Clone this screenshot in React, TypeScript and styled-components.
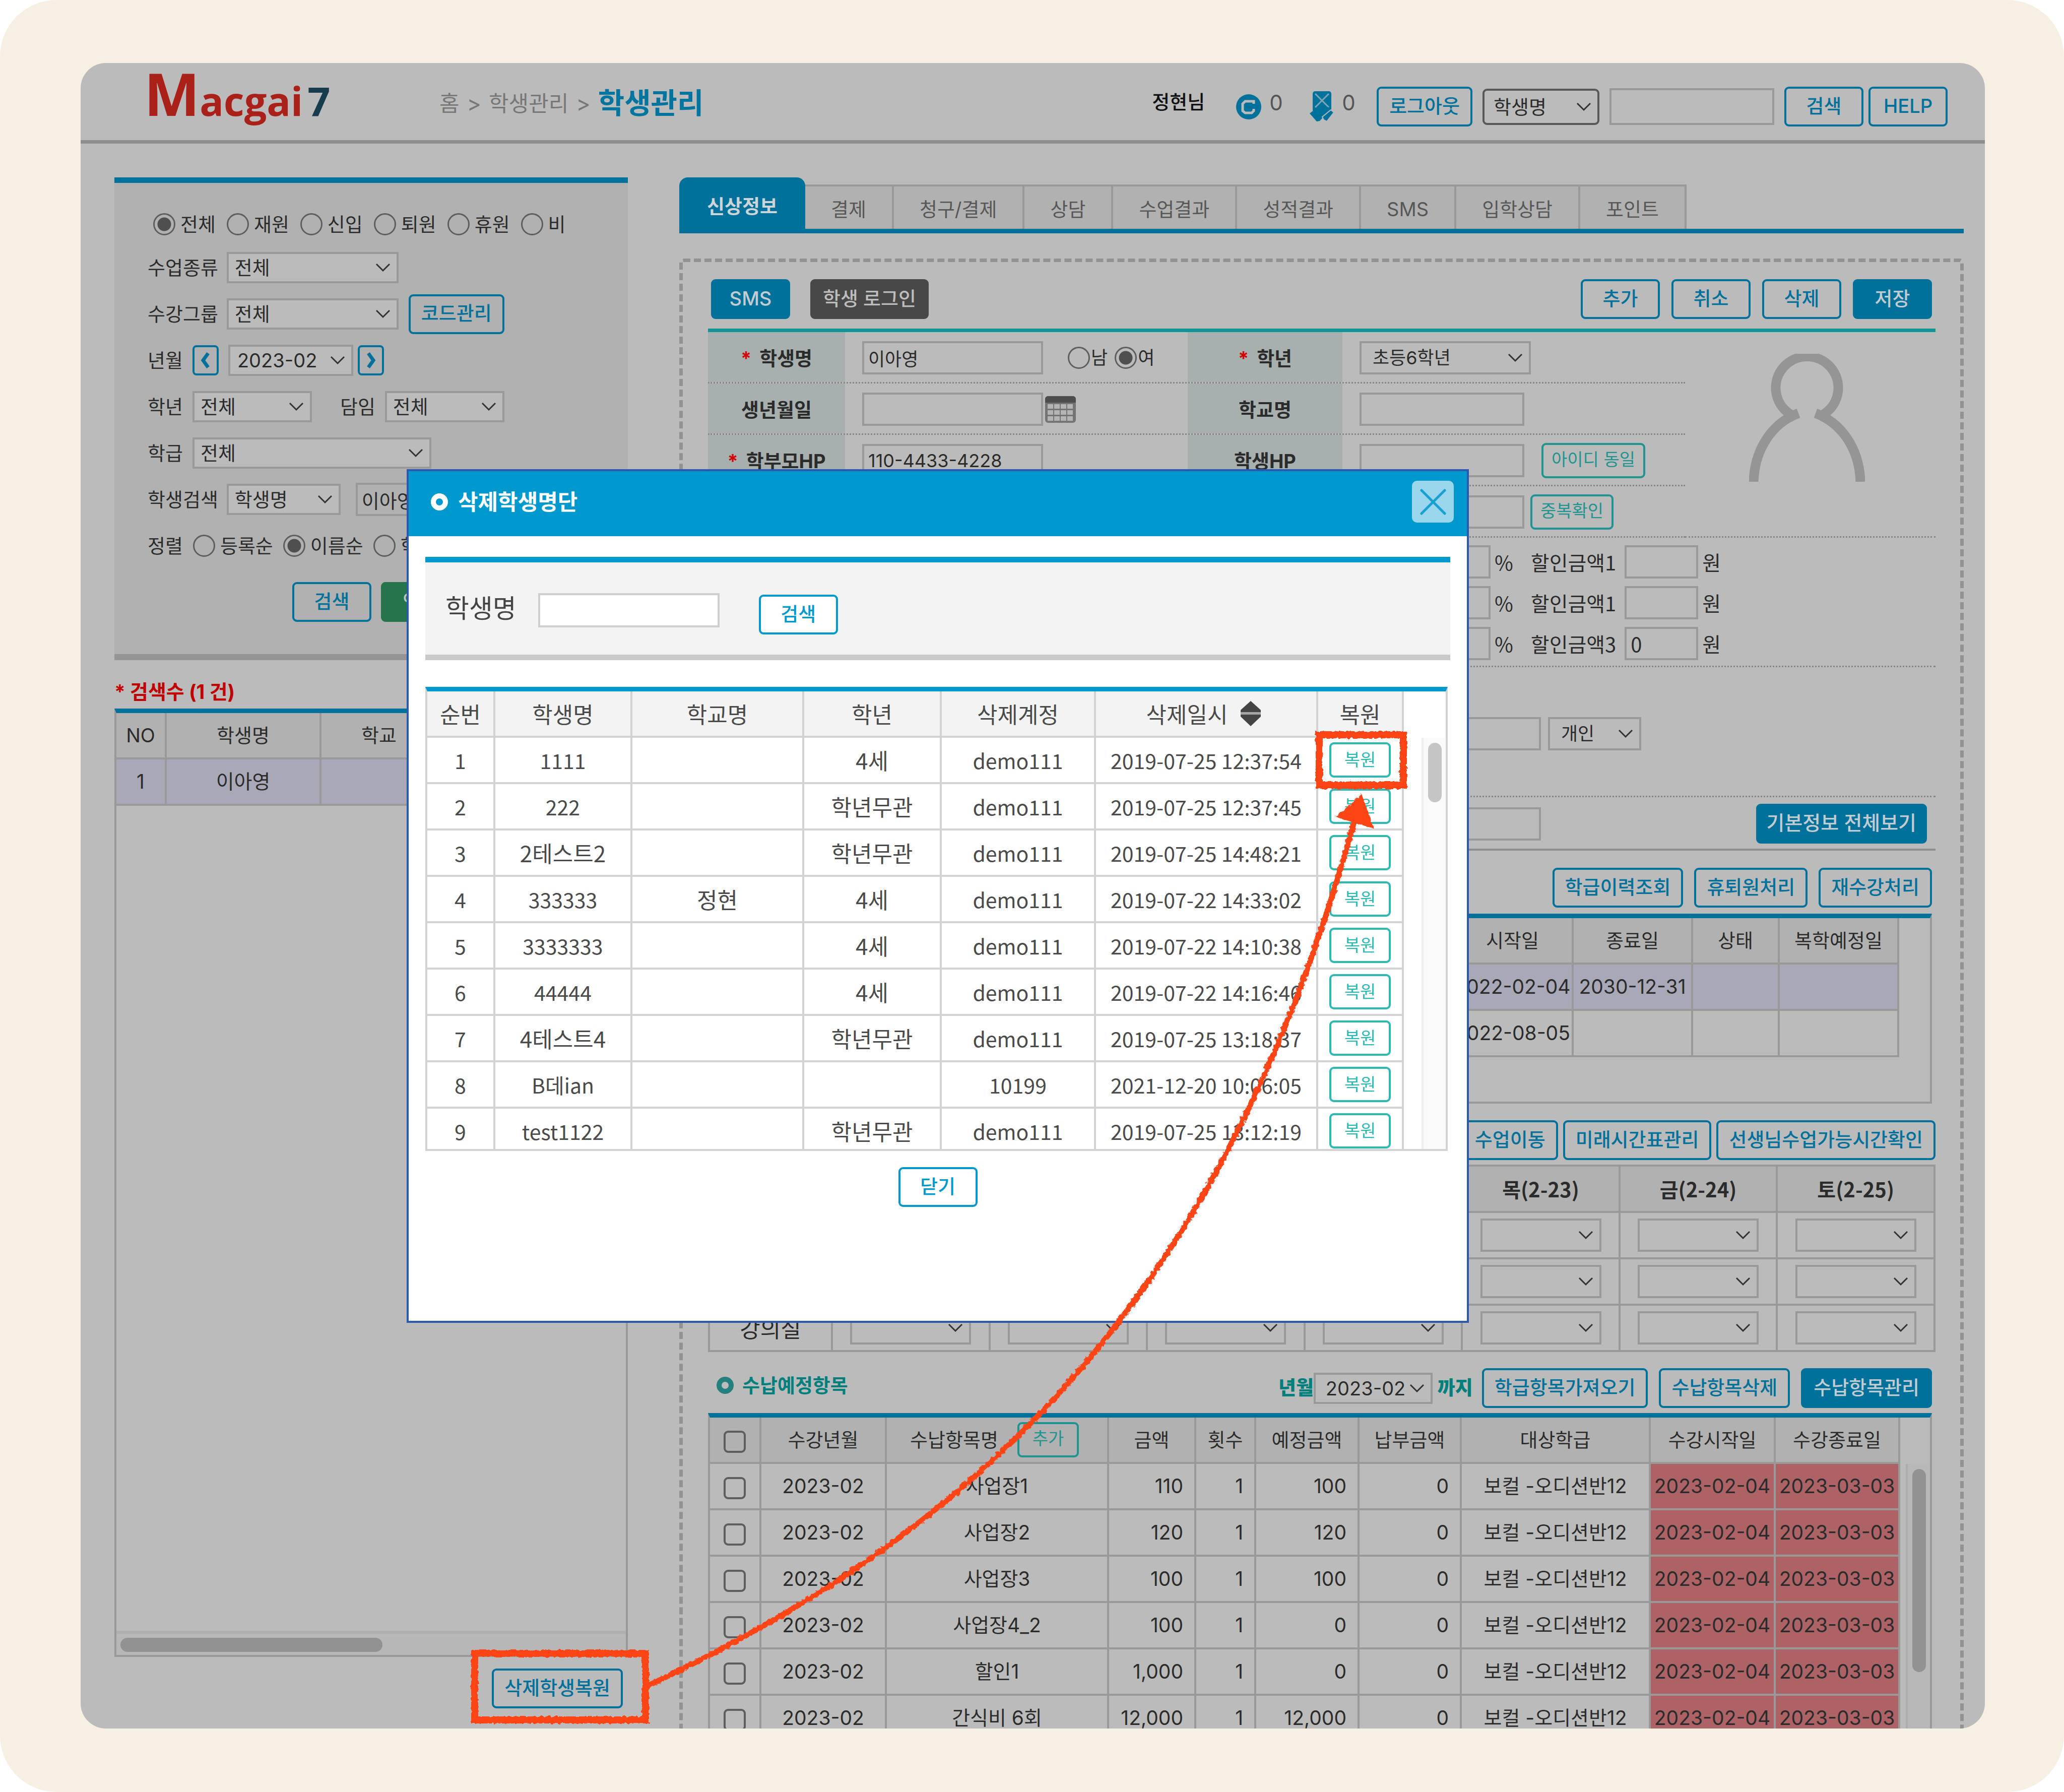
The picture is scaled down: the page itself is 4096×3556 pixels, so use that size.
import React from "react";
import styled, { createGlobalStyle, css } from "styled-components";

const c = {
  cream: "#f8efe3",
  page: "#bbbbbb",
  panel: "#b1b1b1",
  line: "#999999",
  rule: "#8e8e8e",
  blue: "#00719b",
  teal: "#1f9490",
  mint: "#0d9693",
  ink: "#2b2b2b",
  lilac: "#a9a8b6",
  rose: "#ad6266",
  cyan: "#0099cd",
  mark: "#ff4517",
};

const UI = `"Inter", "Noto Sans CJK KR", sans-serif`;
const KR = `"Noto Sans CJK KR", sans-serif`;

const Global = createGlobalStyle`
  *, *::before, *::after { box-sizing: border-box; }
  html, body { margin: 0; background: #ffffff; }
  body { font: 400 38px/48px ${UI}; color: ${c.ink}; }
  button, input, select { font: inherit; color: inherit; margin: 0; }
  h1, h2, p { margin: 0; font: inherit; }
`;

/* ---------- frame ---------- */

const Canvas = styled.div`
  height: 100vh;
  padding: 125px 157px 126px 160px;
  border-radius: 112px;
  background: ${c.cream};
`;

const Card = styled.div`
  position: relative;
  display: flex;
  flex-direction: column;
  height: 100%;
  overflow: hidden;
  border-radius: 50px;
  background: ${c.page};
`;

/* ---------- shared controls ---------- */

type Tone = "line" | "solid" | "dark" | "green" | "teal";

const tones: Record<Tone, ReturnType<typeof css>> = {
  line: css`color: ${c.blue}; border-color: ${c.blue};`,
  solid: css`color: #c3cdd1; background: ${c.blue}; border-color: ${c.blue};`,
  dark: css`color: #bdbdbd; background: #484848; border-color: #484848;`,
  green: css`color: #bdc8c0; background: #25744a; border-color: #25744a;`,
  teal: css`color: ${c.teal}; border-color: ${c.teal};`,
};

const Button = styled.button<{ $tone?: Tone; $onWhite?: boolean }>`
  flex: none;
  min-width: 157px;
  height: 79px;
  padding: 0 21px 4px;
  border: 4px solid;
  border-radius: 9px;
  background: transparent;
  font-weight: 500;
  line-height: 48px;
  white-space: nowrap;
  ${(p) => tones[p.$tone ?? "line"]}
  ${(p) => p.$onWhite && css`color: ${c.cyan}; border-color: ${c.cyan}; background: #fff;`}
`;

const SmallButton = styled(Button)`
  min-width: 122px;
  height: 70px;
  padding: 0 16px 4px;
  font-size: 34px;
  font-weight: 400;
  ${(p) => p.$onWhite && css`color: #2bb9b4; border-color: #2bb9b4;`}
`;

const WideButton = styled(Button)`
  padding: 0 17px 4px;
  font-size: 39px;
`;

const StepButton = styled.button`
  display: grid;
  place-items: center;
  width: 52px;
  height: 60px;
  padding: 0;
  border: 4px solid ${c.blue};
  border-radius: 8px;
  background: transparent;
  color: ${c.blue};
`;

const Field = styled.input<{ $w: number; $h?: number }>`
  flex: none;
  width: ${(p) => p.$w}px;
  height: ${(p) => p.$h ?? 66}px;
  padding: 0 8px;
  border: 4px solid ${c.line};
  border-radius: 0;
  background: transparent;
`;

const SelectWrap = styled.span<{ $w: number; $h?: number; $pad?: number; $dark?: boolean }>`
  flex: none;
  display: inline-grid;
  align-items: center;
  width: ${(p) => p.$w}px;
  height: ${(p) => p.$h ?? 62}px;
  border: 4px solid ${(p) => (p.$dark ? "#585858" : c.line)};
  border-radius: ${(p) => (p.$dark ? 9 : 0)}px;
  background: ${c.page};
  color: ${c.ink};
  font-weight: 400;

  select, svg { grid-area: 1 / 1; }
  select {
    appearance: none;
    width: 100%;
    height: 100%;
    padding: 0 ${(p) => p.$pad ?? 12}px;
    border: 0;
    background: transparent;
  }
  svg { justify-self: end; margin-right: 12px; pointer-events: none; }
`;

function Select(p: { w: number; h?: number; pad?: number; dark?: boolean; label: string; value?: string }) {
  return (
    <SelectWrap $w={p.w} $h={p.h} $pad={p.pad} $dark={p.dark}>
      <select aria-label={p.label}>
        <option>{p.value ?? ""}</option>
      </select>
      <svg width="30" height="18" viewBox="0 0 30 18" fill="none" stroke="#333" strokeWidth="3">
        <path d="M2 2 15 15 28 2" />
      </svg>
    </SelectWrap>
  );
}

const RadioLabel = styled.label<{ $tight?: boolean }>`
  display: inline-flex;
  align-items: center;
  gap: ${(p) => (p.$tight ? 2 : 10)}px;
`;

const RadioInput = styled.input`
  appearance: none;
  flex: none;
  width: 44px;
  height: 44px;
  border: 3px solid #5e5e5e;
  border-radius: 50%;
  &:checked { background: radial-gradient(circle, #4f4f4f 0 13px, transparent 14px); }
`;

function Radio(p: { name: string; text: string; checked?: boolean; tight?: boolean }) {
  return (
    <RadioLabel $tight={p.tight}>
      <RadioInput type="radio" name={p.name} defaultChecked={p.checked} />
      {p.text}
    </RadioLabel>
  );
}

const CheckBox = styled.input`
  appearance: none;
  display: block;
  width: 44px;
  height: 44px;
  margin: 8px auto 0;
  border: 4px solid #5e5e5e;
  border-radius: 9px;
`;

const Ring = styled.span<{ $color: string }>`
  flex: none;
  width: 34px;
  height: 34px;
  border: 10px solid ${(p) => p.$color};
  border-radius: 50%;
`;

/* ---------- header ---------- */

const Header = styled.header`
  flex: none;
  display: flex;
  align-items: center;
  height: 160px;
  padding: 0 74px 0 126px;
  border-bottom: 7px solid ${c.rule};
`;

const Logo = styled.a`
  display: flex;
  align-items: baseline;
  width: 586px;
  padding-bottom: 18px;
  color: #aa211a;
  font: 700 79px/110px "Open Sans", sans-serif;
  text-decoration: none;
`;
const LogoCap = styled.span`font-size: 117px;`;
const LogoSeven = styled.span`margin-left: 9px; color: #173c4d;`;

const Crumbs = styled.nav`
  display: flex;
  align-items: center;
  gap: 15px;
  padding-top: 6px;
  color: #777777;
  font-size: 43px;
  a { color: inherit; text-decoration: none; }
  strong { color: #00759f; font-size: 57px; font-weight: 700; line-height: 72px; }
`;

const Tools = styled.div`
  display: flex;
  align-items: center;
  gap: 20px;
  margin-left: auto;
  padding-top: 20px;
`;
const Pair = styled.div`display: flex; gap: 10px;`;
const User = styled.div`
  display: flex;
  align-items: center;
  margin-right: 21px;
`;
const UserName = styled.span`padding-bottom: 20px; margin-right: 62px; font-weight: 500; color: #111;`;
const Count = styled.span<{ $last?: boolean }>`
  width: 28px;
  margin: 0 ${(p) => (p.$last ? 0 : 52)}px 0 16px;
  padding-bottom: 16px;
  color: #555;
  font-size: 42px;
`;

function CoinIcon() {
  return (
    <svg width="50" height="50" viewBox="0 0 50 50">
      <circle cx="25" cy="25" r="25" fill={c.blue} />
      <path d="M35 19V14H18L13 19V33L18 37H31L35 33V29" fill="none" stroke={c.page} strokeWidth="5" />
      <path d="M22 22H38V28H22Z" fill={c.blue} />
    </svg>
  );
}

function CardIcon() {
  return (
    <svg width="48" height="63" viewBox="0 0 48 63">
      <rect x="6" y="1" width="37" height="42" rx="5" fill={c.blue} />
      <path d="M11 6 38 33M38 6 11 33" stroke="#7fa6b5" strokeWidth="3" />
      <path d="M0 45 25 26 42 36 20 60 14 61Z" fill={c.blue} />
      <path d="M48 43 34 61 28 58 25 52 42 38Z" fill={c.blue} stroke={c.page} strokeWidth="2" />
    </svg>
  );
}

/* ---------- body ---------- */

const Body = styled.main`
  flex: 1;
  min-height: 0;
  display: flex;
  gap: 102px;
  padding: 67px 42px 40px 67px;
`;

const Side = styled.aside`
  flex: none;
  display: flex;
  flex-direction: column;
  width: 1019px;
`;

const Filter = styled.form`
  flex: none;
  padding: 42px 0 64px 66px;
  border-top: 11px solid ${c.blue};
  border-bottom: 12px solid #959595;
  background: ${c.panel};
`;
const Line = styled.div<{ $gap?: number; $indent?: boolean; $first?: boolean }>`
  display: flex;
  align-items: center;
  gap: ${(p) => p.$gap ?? 17}px;
  height: ${(p) => (p.$first ? 80 : 92)}px;
  padding-left: ${(p) => (p.$indent ? 11 : 0)}px;
`;
const Group = styled.span<{ $gap: number }>`
  display: flex;
  align-items: center;
  gap: ${(p) => p.$gap}px;
`;
const Spread = styled.span`width: 18px;`;
const FilterActions = styled.div`
  display: flex;
  gap: 19px;
  padding: 26px 0 0 287px;
`;

const Found = styled.p`
  flex: none;
  height: 96px;
  padding-top: 39px;
  color: #c00000;
  font-size: 39px;
  font-weight: 700;
`;

const Box = styled.div<{ $white?: boolean }>`
  border: 4px solid ${(p) => (p.$white ? "#d2d2d2" : c.line)};
  border-top: 9px solid ${(p) => (p.$white ? c.cyan : c.blue)};
`;
const ResultBox = styled(Box)`
  flex: 1;
  display: flex;
  flex-direction: column;
  justify-content: space-between;
  overflow: hidden;
`;
const HTrack = styled.div`
  height: 48px;
  padding: 8px 8px;
  border-top: 6px solid #b0b0b0;
  background: #b7b7b7;
`;
const HThumb = styled.div`width: 520px; height: 28px; border-radius: 14px; background: #929292;`;

const SideFoot = styled.div`
  flex: none;
  display: flex;
  justify-content: flex-end;
  padding: 23px 10px 0 0;
`;

/* ---------- tables ---------- */

const Table = styled.table<{ $white?: boolean }>`
  flex: none;
  table-layout: fixed;
  border-collapse: separate;
  border-spacing: 0;
  width: 0;

  th, td {
    height: 92px;
    padding: 0;
    border: 0 solid ${(p) => (p.$white ? "#d2d2d2" : c.line)};
    border-width: 0 4px 4px 0;
    text-align: center;
    font-weight: 400;
    white-space: nowrap;
    overflow: hidden;
  }
  th { background: ${(p) => (p.$white ? "#f3f3f3" : c.panel)}; }
  td { font-size: 39px; }
  ${(p) => p.$white && css`
    color: #4a4a4a;
    font: 400 41px/52px ${KR};
    th { font-size: 44px; }
    td { font-size: 41px; }
  `}
`;
const Picked = styled.tr`td { background: ${c.lilac}; }`;
const NumCell = styled.td`&& { padding-right: 22px; text-align: right; }`;
const DueCell = styled.td`&& { background: ${c.rose}; }`;
const TextCell = styled.td<{ $large: boolean }>`&& { font-size: ${(p) => (p.$large ? 44 : 41)}px; }`;
const HeadFlex = styled.span<{ $gap: number }>`
  display: flex;
  align-items: center;
  justify-content: center;
  gap: ${(p) => p.$gap}px;
  padding-right: 10px;
`;

function Cols(p: { widths: number[] }) {
  return (
    <colgroup>
      {p.widths.map((w, i) => (
        <col key={i} style={{ width: w }} />
      ))}
    </colgroup>
  );
}

const Scrolled = styled.div`display: flex;`;
const Rail = styled.div`
  flex: 1;
  display: flex;
  justify-content: flex-end;
  padding-top: 92px;
`;
const Track = styled.div<{ $white?: boolean }>`
  width: 48px;
  padding: 10px 9px;
  border-left: 4px solid ${(p) => (p.$white ? "#eeeeee" : "#adadad")};
  background: ${(p) => (p.$white ? "#fafafa" : "#b8b8b8")};
`;
const Thumb = styled.div<{ $h: number; $white?: boolean }>`
  width: 27px;
  height: ${(p) => p.$h}px;
  border-radius: 14px;
  background: ${(p) => (p.$white ? "#c5c5c5" : "#929292")};
`;

/* ---------- detail pane ---------- */

const Detail = styled.section`flex: 1; min-width: 0;`;

const Tabs = styled.nav`
  display: flex;
  align-items: flex-end;
  height: 111px;
  border-bottom: 9px solid ${c.blue};
`;
const Tab = styled.a`
  height: 88px;
  padding: 0 51px;
  border: 4px solid ${c.line};
  border-width: 4px 4px 0 0;
  background: ${c.panel};
  color: #575757;
  line-height: 90px;
  text-decoration: none;
`;
const ActiveTab = styled.a`
  height: 102px;
  width: 250px;
  border-radius: 17px 17px 0 0;
  background: ${c.blue};
  color: #cdd5d8;
  font-weight: 700;
  line-height: 114px;
  text-align: center;
  text-decoration: none;
`;

const Dashed = styled.div`
  margin-top: 50px;
  padding: 34px 49px 60px 50px;
  border: 7px dashed #929292;
  border-radius: 8px;
`;

const Row = styled.div<{ $gap: number; $top: number; $bottom: number; $right?: number }>`
  display: flex;
  align-items: center;
  justify-content: flex-end;
  gap: ${(p) => p.$gap}px;
  padding: ${(p) => p.$top}px ${(p) => p.$right ?? 7}px ${(p) => p.$bottom}px 6px;
`;
const LeftSide = styled.div<{ $gap: number }>`
  display: flex;
  align-items: center;
  gap: ${(p) => p.$gap}px;
  margin-right: auto;
`;

const Form = styled.form`
  border-top: 7px solid ${c.mint};
  border-bottom: 4px solid ${c.rule};
`;
const FormTop = styled.div`display: flex;`;
const FormRows = styled.div`width: 1939px;`;
const FormRow = styled.div<{ $h?: number; $plain?: boolean }>`
  display: grid;
  grid-template-columns: 272px 680px 307px 1fr;
  min-height: ${(p) => p.$h ?? 102}px;
  border-bottom: ${(p) => (p.$plain ? "0" : "3px dotted #868686")};
`;
const Key = styled.label`
  display: flex;
  align-items: center;
  justify-content: center;
  gap: 16px;
  padding-top: 4px;
  background: #a7afaf;
  font-weight: 700;
  i { color: #d40000; font-style: normal; }
`;
const Val = styled.div<{ $top?: number; $gap?: number }>`
  display: flex;
  align-items: center;
  gap: ${(p) => p.$gap ?? 12}px;
  padding: ${(p) => p.$top ?? 3}px 17px 0 34px;
  font-size: 36px;
`;
const Sexes = styled.span`display: flex; gap: 14px; margin-left: 37px;`;
const PushRight = styled.span`margin-left: auto; display: flex;`;
const Discounts = styled.div`
  display: grid;
  gap: 15px;
  align-content: center;
  padding: 3px 0 0 33px;
  font: 400 40px/52px ${KR};
`;
const Discount = styled.label`
  display: flex;
  align-items: center;
  gap: 8px;
  span { margin: 0 9px 0 27px; }
`;
const Photo = styled.div`
  flex: 1;
  display: grid;
  justify-content: center;
  align-content: start;
  padding: 43px 14px 0 0;
  border-bottom: 3px dotted #868686;
`;

const HistoryBox = styled(Box)`height: 377px; margin-right: 7px;`;

const WeekTable = styled(Table)`
  width: 100%;
  border: 4px solid ${c.line};
  border-width: 4px 0 0 4px;
  th { font: 700 40px/52px ${KR}; }
  td:first-child { font: 400 44px/52px ${KR}; }
  td > span { vertical-align: middle; }
`;

const DueTitle = styled.h2`
  display: flex;
  align-items: center;
  gap: 17px;
  margin-left: 11px;
  padding-bottom: 12px;
  color: #00807c;
  font-weight: 700;
`;
const MonthPick = styled.label`
  display: flex;
  align-items: center;
  margin-right: -4px;
  color: #00807c;
  font-weight: 700;
  b { padding-bottom: 4px; }
  span + b { margin-left: 10px; }
`;
const DueButtons = styled.div`display: flex; gap: 22px;`;
const DueBox = styled(Box)`margin-right: 7px;`;

/* ---------- modal ---------- */

const Modal = styled.section`
  position: absolute;
  left: 647px;
  top: 806px;
  width: 2108px;
  height: 1694px;
  border: 4px solid #2b59b0;
  background: #ffffff;
`;
const ModalHead = styled.header`
  display: flex;
  align-items: center;
  gap: 20px;
  height: 129px;
  padding: 0 26px 8px 44px;
  background: ${c.cyan};
  color: #ffffff;
  h2 { font-size: 43px; font-weight: 700; }
`;
const Close = styled.button`
  display: grid;
  place-items: center;
  width: 83px;
  height: 83px;
  margin-left: auto;
  padding: 0;
  border: 0;
  border-radius: 10px;
  background: #9ad6ec;
`;
const ModalBody = styled.div`padding: 41px 33px 0;`;
const ModalFilter = styled.form`
  display: flex;
  align-items: center;
  height: 205px;
  padding: 0 0 0 40px;
  border-top: 11px solid ${c.cyan};
  border-bottom: 11px solid #c9c9c9;
  background: #f3f3f3;
  color: #444;
  font: 400 51px/60px ${KR};
  label { padding-bottom: 8px; }
  input { margin: 6px 78px 0 43px; border-color: #cfcfcf; background: #fff; }
  button { margin-top: 24px; font: 500 38px/48px ${UI}; }
`;
const ListBox = styled(Box)`
  height: 921px;
  margin: 53px 5px 32px 0;
  overflow: hidden;
`;
const ModalFoot = styled.div`display: flex; justify-content: center;`;

const Marks = styled.svg`
  position: absolute;
  left: 0;
  top: 0;
  pointer-events: none;
`;

/* ---------- data ---------- */

const tabs = ["결제", "청구/결제", "상담", "수업결과", "성적결과", "SMS", "입학상담", "포인트"];
const states = ["전체", "재원", "신입", "퇴원", "휴원", "비"];
const days = ["일(2-19)", "월(2-20)", "화(2-21)", "수(2-22)", "목(2-23)", "금(2-24)", "토(2-25)"];

const dues = [
  ["사업장1", "110", "100"],
  ["사업장2", "120", "120"],
  ["사업장3", "100", "100"],
  ["사업장4_2", "100", "0"],
  ["할인1", "1,000", "0"],
  ["간식비 6회", "12,000", "12,000"],
];

const removed = [
  ["1111", "", "4세", "demo111", "2019-07-25 12:37:54"],
  ["222", "", "학년무관", "demo111", "2019-07-25 12:37:45"],
  ["2테스트2", "", "학년무관", "demo111", "2019-07-25 14:48:21"],
  ["333333", "정현", "4세", "demo111", "2019-07-22 14:33:02"],
  ["3333333", "", "4세", "demo111", "2019-07-22 14:10:38"],
  ["44444", "", "4세", "demo111", "2019-07-22 14:16:46"],
  ["4테스트4", "", "학년무관", "demo111", "2019-07-25 13:18:37"],
  ["B데ian", "", "", "10199", "2021-12-20 10:06:05"],
  ["test1122", "", "학년무관", "demo111", "2019-07-25 13:12:19"],
];

/* ---------- sections ---------- */

function TopBar() {
  return (
    <Header>
      <Logo href="#">
        <LogoCap>M</LogoCap>
        <span>acgai</span>
        <LogoSeven>7</LogoSeven>
      </Logo>
      <Crumbs>
        <a href="#">홈</a>
        <span>&gt;</span>
        <a href="#">학생관리</a>
        <span>&gt;</span>
        <strong>학생관리</strong>
      </Crumbs>
      <Tools>
        <User>
          <UserName>정현님</UserName>
          <CoinIcon />
          <Count>0</Count>
          <CardIcon />
          <Count $last>0</Count>
        </User>
        <Button>로그아웃</Button>
        <Select w={232} h={72} pad={18} dark label="검색 항목" value="학생명" />
        <Field $w={327} $h={73} aria-label="검색어" />
        <Pair>
          <Button>검색</Button>
          <Button>HELP</Button>
        </Pair>
      </Tools>
    </Header>
  );
}

function Chevron(p: { d: string }) {
  return (
    <svg width="24" height="34" viewBox="0 0 24 34" fill="none" stroke="currentColor" strokeWidth="7">
      <path d={p.d} />
    </svg>
  );
}

function Sidebar() {
  return (
    <Side>
      <Filter>
        <Line $gap={22} $indent $first>
          {states.map((s, i) => (
            <Radio key={s} name="state" text={s} checked={i === 0} />
          ))}
        </Line>
        <Line>
          수업종류
          <Select w={341} label="수업종류" value="전체" />
        </Line>
        <Line>
          수강그룹
          <Group $gap={20}>
            <Select w={341} label="수강그룹" value="전체" />
            <Button type="button">코드관리</Button>
          </Group>
        </Line>
        <Line $gap={19}>
          년월
          <StepButton type="button" aria-label="이전 달"><Chevron d="M17 3 7 17 17 31" /></StepButton>
          <Group $gap={9}>
            <Select w={248} pad={14} label="년월" value="2023-02" />
            <StepButton type="button" aria-label="다음 달"><Chevron d="M7 3 17 17 7 31" /></StepButton>
          </Group>
        </Line>
        <Line $gap={19}>
          학년
          <Select w={237} label="학년" value="전체" />
          <Spread />
          담임
          <Select w={237} label="담임" value="전체" />
        </Line>
        <Line $gap={19}>
          학급
          <Select w={474} label="학급" value="전체" />
        </Line>
        <Line>
          학생검색
          <Group $gap={30}>
            <Select w={226} label="학생검색" value="학생명" />
            <Field $w={260} defaultValue="이아영" aria-label="학생 검색어" />
          </Group>
        </Line>
        <Line $gap={20}>
          정렬
          <Radio name="order" text="등록순" />
          <Radio name="order" text="이름순" checked />
          <Radio name="order" text="학년순" />
        </Line>
        <FilterActions>
          <Button type="button">검색</Button>
          <Button type="button" $tone="green">엑셀</Button>
        </FilterActions>
      </Filter>
      <Found>* 검색수 (1 건)</Found>
      <ResultBox>
        <Table>
          <Cols widths={[100, 307, 232, 372]} />
          <thead>
            <tr><th>NO</th><th>학생명</th><th>학교</th><th /></tr>
          </thead>
          <tbody>
            <Picked><td>1</td><td>이아영</td><td /><td /></Picked>
          </tbody>
        </Table>
        <HTrack><HThumb /></HTrack>
      </ResultBox>
      <SideFoot>
        <Button>삭제학생복원</Button>
      </SideFoot>
    </Side>
  );
}

function CalendarIcon() {
  return (
    <svg width="61" height="53" viewBox="0 0 61 53">
      <rect width="61" height="53" rx="6" fill="#747474" />
      <path d="M0 13V6a6 6 0 0 1 6-6h49a6 6 0 0 1 6 6v7Z" fill="#4d4d4d" />
      {[16, 28, 40].map((y) =>
        [5, 18, 31, 44].map((x) => <rect key={`${x}-${y}`} x={x} y={y} width="11" height="9" fill="#b4b4b4" />)
      )}
    </svg>
  );
}

function StudentForm() {
  return (
    <Form>
      <FormTop>
        <FormRows>
          <FormRow>
            <Key htmlFor="name"><i>*</i>학생명</Key>
            <Val>
              <Field id="name" $w={359} defaultValue="이아영" />
              <Sexes>
                <Radio name="sex" text="남" tight />
                <Radio name="sex" text="여" tight checked />
              </Sexes>
            </Val>
            <Key><i>*</i>학년</Key>
            <Val><Select w={340} h={66} pad={22} label="학년" value="초등6학년" /></Val>
          </FormRow>
          <FormRow>
            <Key htmlFor="birth">생년월일</Key>
            <Val $gap={4}><Field id="birth" $w={359} /><CalendarIcon /></Val>
            <Key htmlFor="school">학교명</Key>
            <Val><Field id="school" $w={327} /></Val>
          </FormRow>
          <FormRow>
            <Key htmlFor="parent"><i>*</i>학부모HP</Key>
            <Val><Field id="parent" $w={359} defaultValue="110-4433-4228" /></Val>
            <Key htmlFor="mobile">학생HP</Key>
            <Val $gap={34}>
              <Field id="mobile" $w={327} />
              <SmallButton type="button" $tone="teal">아이디 동일</SmallButton>
            </Val>
          </FormRow>
          <FormRow>
            <Key /><Val /><Key />
            <Val>
              <Field $w={327} aria-label="아이디" />
              <SmallButton type="button" $tone="teal">중복확인</SmallButton>
            </Val>
          </FormRow>
        </FormRows>
        <Photo>
          <svg width="230" height="254" viewBox="0 0 230 254" fill="none" stroke="#959595" strokeWidth="19">
            <path d="M92 127 79 118A62 62 0 1 1 151 118L138 127" />
            <path d="M98 118C45 138 11 190 9 254M132 118C185 138 219 190 221 254" />
          </svg>
        </Photo>
      </FormTop>
      <FormRow $h={257}>
        <Key /><Val /><Key />
        <Discounts>
          {[["1", ""], ["1", ""], ["3", "0"]].map(([n, v], i) => (
            <Discount key={i}>
              <Field $w={261} aria-label={`할인율${i + 1}`} />
              %
              <span>할인금액{n}</span>
              <Field $w={146} defaultValue={v} aria-label={`할인금액${i + 1}`} />
              원
            </Discount>
          ))}
        </Discounts>
      </FormRow>
      <FormRow $h={258}>
        <Key /><Val /><Key />
        <Val $top={8} $gap={14}>
          <Field $w={360} aria-label="현금영수증" />
          <Select w={185} h={66} pad={22} label="구분" value="개인" />
        </Val>
      </FormRow>
      <FormRow $plain>
        <Key /><Val /><Key />
        <Val>
          <Field $w={360} aria-label="비고" />
          <PushRight><WideButton type="button" $tone="solid">기본정보 전체보기</WideButton></PushRight>
        </Val>
      </FormRow>
    </Form>
  );
}

function History() {
  return (
    <HistoryBox>
      <Table>
        <Cols widths={[1475, 239, 237, 172, 237]} />
        <thead>
          <tr><th /><th>시작일</th><th>종료일</th><th>상태</th><th>복학예정일</th></tr>
        </thead>
        <tbody>
          <Picked><td /><td>2022-02-04</td><td>2030-12-31</td><td /><td /></Picked>
          <tr><td /><td>2022-08-05</td><td /><td /><td /></tr>
        </tbody>
      </Table>
    </HistoryBox>
  );
}

function Week() {
  return (
    <WeekTable>
      <colgroup><col style={{ width: 244 }} /></colgroup>
      <thead>
        <tr><th />{days.map((d) => <th key={d}>{d}</th>)}</tr>
      </thead>
      <tbody>
        {["수업", "선생님", "강의실"].map((r) => (
          <tr key={r}>
            <td>{r}</td>
            {days.map((d) => (
              <td key={d}><Select w={240} h={66} label={`${d} ${r}`} /></td>
            ))}
          </tr>
        ))}
      </tbody>
    </WeekTable>
  );
}

function Dues() {
  return (
    <DueBox>
      <Scrolled>
        <Table>
          <Cols widths={[102, 249, 441, 173, 119, 205, 203, 375, 248, 247]} />
          <thead>
            <tr>
              <th><CheckBox type="checkbox" aria-label="전체 선택" /></th>
              <th>수강년월</th>
              <th><HeadFlex $gap={38}>수납항목명 <SmallButton $tone="teal">추가</SmallButton></HeadFlex></th>
              <th>금액</th><th>횟수</th><th>예정금액</th><th>납부금액</th>
              <th>대상학급</th><th>수강시작일</th><th>수강종료일</th>
            </tr>
          </thead>
          <tbody>
            {dues.map(([name, price, due]) => (
              <tr key={name}>
                <td><CheckBox type="checkbox" aria-label={name} /></td>
                <td>2023-02</td>
                <td>{name}</td>
                <NumCell>{price}</NumCell>
                <NumCell>1</NumCell>
                <NumCell>{due}</NumCell>
                <NumCell>0</NumCell>
                <td>보컬 -오디션반12</td>
                <DueCell>2023-02-04</DueCell>
                <DueCell>2023-03-03</DueCell>
              </tr>
            ))}
          </tbody>
        </Table>
        <Rail><Track><Thumb $h={403} /></Track></Rail>
      </Scrolled>
    </DueBox>
  );
}

function DetailPane() {
  return (
    <Detail>
      <Tabs>
        <ActiveTab href="#">신상정보</ActiveTab>
        {tabs.map((t) => <Tab key={t} href="#">{t}</Tab>)}
      </Tabs>
      <Dashed>
        <Row $gap={23} $top={0} $bottom={19}>
          <LeftSide $gap={40}>
            <Button $tone="solid">SMS</Button>
            <Button $tone="dark">학생 로그인</Button>
          </LeftSide>
          <Button>추가</Button>
          <Button>취소</Button>
          <Button>삭제</Button>
          <Button $tone="solid">저장</Button>
        </Row>
        <StudentForm />
        <Row $gap={22} $top={34} $bottom={12}>
          <Button>학급이력조회</Button>
          <Button>휴퇴원처리</Button>
          <Button>재수강처리</Button>
        </Row>
        <History />
        <Row $gap={10} $top={33} $bottom={9} $right={0}>
          <Button>수업이동</Button>
          <Button>미래시간표관리</Button>
          <Button>선생님수업가능시간확인</Button>
        </Row>
        <Week />
        <Row $gap={22} $top={32} $bottom={10}>
          <LeftSide $gap={16}>
            <DueTitle><Ring $color="#23807e" />수납예정항목</DueTitle>
          </LeftSide>
          <MonthPick>
            <b>년월</b>
            <Select w={236} h={62} pad={20} label="년월" value="2023-02" />
            <b>까지</b>
          </MonthPick>
          <DueButtons>
            <Button>학급항목가져오기</Button>
            <Button>수납항목삭제</Button>
            <Button $tone="solid">수납항목관리</Button>
          </DueButtons>
        </Row>
        <Dues />
      </Dashed>
    </Detail>
  );
}

function SortIcon() {
  return (
    <svg width="40" height="50" viewBox="0 0 40 50">
      <path d="M20 0 40 18V22H0V18Z" fill="#444" />
      <path d="M0 22H40V27H0Z" fill="#a5a5a5" />
      <path d="M0 27H40V31L20 50 0 31Z" fill="#444" />
    </svg>
  );
}

function RestoreModal() {
  return (
    <Modal role="dialog" aria-label="삭제학생명단">
      <ModalHead>
        <Ring $color="#ffffff" />
        <h2>삭제학생명단</h2>
        <Close aria-label="닫기">
          <svg width="52" height="52" viewBox="0 0 52 52" stroke="#1b9fd0" strokeWidth="5" strokeLinecap="round">
            <path d="M3 3 49 49M49 3 3 49" />
          </svg>
        </Close>
      </ModalHead>
      <ModalBody>
        <ModalFilter>
          <label htmlFor="removed">학생명</label>
          <Field id="removed" $w={360} $h={68} />
          <Button type="button" $onWhite>검색</Button>
        </ModalFilter>
        <ListBox $white>
          <Scrolled>
            <Table $white>
              <Cols widths={[135, 272, 341, 273, 306, 441, 170]} />
              <thead>
                <tr>
                  <th>순번</th><th>학생명</th><th>학교명</th><th>학년</th><th>삭제계정</th>
                  <th><HeadFlex $gap={26}>삭제일시 <SortIcon /></HeadFlex></th>
                  <th>복원</th>
                </tr>
              </thead>
              <tbody>
                {removed.map((r, i) => (
                  <tr key={i}>
                    <td>{i + 1}</td>
                    {r.map((v, j) => <TextCell key={j} $large={/[가-힣]$|스트/.test(v)}>{v}</TextCell>)}
                    <td><SmallButton $tone="teal" $onWhite>복원</SmallButton></td>
                  </tr>
                ))}
              </tbody>
            </Table>
            <Rail><Track $white><Thumb $white $h={118} /></Track></Rail>
          </Scrolled>
        </ListBox>
        <ModalFoot><Button $onWhite>닫기</Button></ModalFoot>
      </ModalBody>
    </Modal>
  );
}

function GuideMarks() {
  return (
    <Marks width="3779" height="3305" viewBox="160 125 3779 3305" fill="none" stroke={c.mark}>
      <filter id="crayon" filterUnits="userSpaceOnUse" x="160" y="125" width="3779" height="3305">
        <feTurbulence type="fractalNoise" baseFrequency="0.14" numOctaves="2" seed="4" />
        <feDisplacementMap in="SourceGraphic" scale="7" />
      </filter>
      <g filter="url(#crayon)">
        <rect x="2618" y="1458" width="167" height="100" strokeWidth="14" />
        <rect x="942" y="3281" width="339" height="132" strokeWidth="14" />
        <path d="M1284 3346C1932 3040 2424 2590 2688 1628" strokeWidth="11" />
        <path d="M2701 1580 2656 1620 2688 1630 2722 1640Z" fill={c.mark} strokeWidth="5" />
      </g>
    </Marks>
  );
}

export default function App() {
  return (
    <>
      <Global />
      <Canvas>
        <Card>
          <TopBar />
          <Body>
            <Sidebar />
            <DetailPane />
          </Body>
          <RestoreModal />
          <GuideMarks />
        </Card>
      </Canvas>
    </>
  );
}
